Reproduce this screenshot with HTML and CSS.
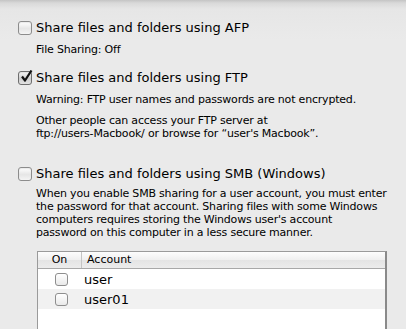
FILE: index.html
```html
<!DOCTYPE html>
<html lang="en">
<head>
  <meta charset="UTF-8" />
  <title>Sharing - File Sharing Options</title>
  <link rel="stylesheet" href="styles.css">
</head>
<body>
  <div class="sheet">
    <label class="option">
      <span class="check"></span>
      <span class="title">Share files and folders using AFP</span>
    </label>
    <p class="desc afp">File Sharing: Off</p>

    <label class="option ftp">
      <span class="check checked">
        <svg viewBox="0 0 14 14" width="14" height="14"><path d="M3 6.5 L6 10.5 L12.5 0.5" fill="none" stroke="#111" stroke-width="2.2" stroke-linejoin="round"/></svg>
      </span>
      <span class="title">Share files and folders using FTP</span>
    </label>
    <p class="desc warn">Warning: FTP user names and passwords are not encrypted.</p>
    <p class="desc other">Other people can access your FTP server at<br>ftp://users-Macbook/ or browse for “user's Macbook”.</p>

    <label class="option smb">
      <span class="check"></span>
      <span class="title">Share files and folders using SMB (Windows)</span>
    </label>
    <p class="desc para">When you enable SMB sharing for a user account, you must enter<br>the password for that account. Sharing files with some Windows<br>computers requires storing the Windows user's account<br>password on this computer in a less secure manner.</p>

    <div class="accounts">
      <div class="head">
        <div class="col-on">On</div>
        <div class="col-account">Account</div>
      </div>
      <div class="row">
        <div class="col-on"><span class="box"></span></div>
        <div class="col-account">user</div>
      </div>
      <div class="row alt">
        <div class="col-on"><span class="box"></span></div>
        <div class="col-account">user01</div>
      </div>
      <div class="row"></div>
    </div>
  </div>
</body>
</html>
```

FILE: styles.css
```css
* {
  box-sizing: border-box;
  margin: 0;
  padding: 0;
}

body {
  width: 406px;
  height: 329px;
  overflow: hidden;
  background: linear-gradient(#c4c4c4 0px, #d9d9d9 3px, #e6e6e6 9px, #eaeaea 40px);
  font-family: "DejaVu Sans", "Liberation Sans", sans-serif;
  color: #000;
}

.sheet {
  padding: 19px 0 0 18px;
}

.option {
  display: flex;
  align-items: center;
  gap: 4px;
  height: 17px;
}

.option.ftp {
  margin-top: 13px;
}

.option.smb {
  margin-top: 25px;
}

.title {
  font-size: 13px;
  white-space: nowrap;
}

.check {
  width: 14px;
  height: 14px;
  flex: none;
  border: 1px solid #8c8c8c;
  border-radius: 3px;
  background: linear-gradient(#ffffff, #e6e6e6 55%, #f4f4f4);
  box-shadow: inset 0 1px 1px rgba(0,0,0,0.08);
  position: relative;
}

.check.checked {
  background: linear-gradient(#f6f6f6, #cfcfcf 55%, #e2e2e2);
  border-color: #6e6e6e;
}

.check svg {
  position: absolute;
  left: 0;
  top: -2px;
}

.desc {
  margin-left: 18px;
  font-size: 11px;
  line-height: 13px;
  letter-spacing: -0.2px;
  white-space: nowrap;
}

.desc.afp,
.desc.warn {
  margin-top: 7px;
}

.desc.other {
  margin-top: 8px;
}

.desc.para {
  margin-top: 5px;
}

.accounts {
  margin: 12px 0 0 19px;
  width: 350px;
  height: 90px;
  border: 1px solid #9a9a9a;
  border-right: 2px solid #8a8a8a;
  border-bottom: none;
  background: #fff;
}

.head {
  display: flex;
  height: 17px;
  border-bottom: 1px solid #a8a8a8;
  background: linear-gradient(#fdfdfd, #efefef 50%, #e4e4e4 51%, #ececec);
  font-size: 11px;
  line-height: 16px;
}

.head .col-on {
  border-right: 1px solid #c4c4c4;
  text-align: center;
}

.head .col-account {
  padding-left: 5px;
}

.col-on {
  width: 44px;
  flex: none;
}

.row {
  display: flex;
  align-items: center;
  height: 20px;
}

.row.alt {
  background: #f1f1f1;
}

.row .col-on {
  display: flex;
  justify-content: center;
  padding-left: 2px;
}

.row .col-account {
  padding-left: 2px;
  font-size: 13px;
}

.box {
  width: 13px;
  height: 13px;
  border: 1px solid #8e8e8e;
  border-radius: 3px;
  background: linear-gradient(#ffffff, #e9e9e9);
}
```
